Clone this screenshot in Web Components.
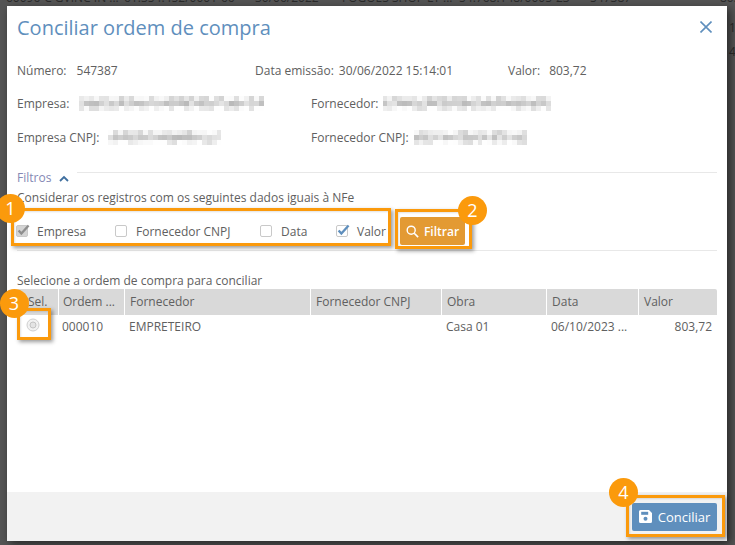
<!DOCTYPE html>
<html lang="pt-BR">
<head>
<meta charset="utf-8">
<title>Conciliar ordem de compra</title>
<style>
  html, body { margin: 0; height: 545px; overflow: hidden; background: #555; }
  body { font-family: "Open Sans", sans-serif; font-size: 12px; color: #606060; }
</style>
</head>
<body>
<conciliar-page></conciliar-page>
<script>
class PixelBlur extends HTMLElement
{
  connectedCallback ()
  {
    const width = Number(this.getAttribute('width'))
    const seed = Number(this.getAttribute('seed') || 3)
    const columns = Math.round(width / 5)
    const rowBase = [232, 208, 243]
    let cells = ''
    let value = seed * 97

    for (let i = 0; i < columns * 3; i++) {
      value = (value * 137 + 59) % 1013
      const grey = Math.min(254, rowBase[Math.floor(i / columns)] + (value % 44) - 22)
      cells += `<i style="background:rgb(${grey},${grey},${grey})"></i>`
    }

    this.attachShadow({ mode: 'open' }).innerHTML = `
      <style>
        :host { display: inline-block; width: ${width}px; height: 15px; }
        div { display: grid; grid-template-columns: repeat(${columns}, 1fr); grid-auto-rows: 5px; }
      </style>
      <div>${cells}</div>
    `
  }
}

class InfoField extends HTMLElement
{
  constructor ()
  {
    super()
    this.attachShadow({ mode: 'open' }).innerHTML = `
      <style>
        :host { display: flex; align-items: center; flex: none; white-space: nowrap; }
        .label { margin-right: var(--gap, 6px); }
        .value { display: flex; align-items: center; }
      </style>
      <span class="label"><slot name="label"></slot></span>
      <span class="value"><slot></slot></span>
    `
  }
}

class FilterCheck extends HTMLElement
{
  connectedCallback ()
  {
    const state = this.getAttribute('state')
    const tick = state === 'grey' ? '#8e8e8e' : '#5f8fbd'
    const fill = state === 'grey' ? '#d4d4d4' : '#fff'
    const mark = state
      ? `<path d="M2.6 6.4 5.4 9.6 12.6 1.6" fill="none" stroke="${tick}" stroke-width="2.3"/>`
      : ''

    this.attachShadow({ mode: 'open' }).innerHTML = `
      <style>
        :host { display: flex; align-items: center; flex: none; white-space: nowrap; }
        svg { width: 14px; height: 14px; margin-right: 7px; overflow: visible; }
      </style>
      <svg viewBox="0 0 14 14">
        <rect x=".5" y="1.5" width="11" height="11" rx="1.5" fill="${fill}" stroke="#c9c9c9"/>
        ${mark}
      </svg>
      <slot></slot>
    `
  }
}

class OrderTable extends HTMLElement
{
  constructor ()
  {
    super()
    const columns = [
      ['Sel.', 41, ''],
      ['Ordem ...', 66, '000010'],
      ['Fornecedor', 186, 'EMPRETEIRO'],
      ['Fornecedor CNPJ', 131, ''],
      ['Obra', 105, 'Casa 01'],
      ['Data', 92, '06/10/2023 ...'],
      ['Valor', 79, '803,72']
    ]
    const track = columns.map(c => c[1] + 'px').join(' ')

    this.attachShadow({ mode: 'open' }).innerHTML = `
      <style>
        :host { display: block; }
        .row { display: grid; grid-template-columns: ${track}; }
        .head { background: #d9d9d9; height: 26px; line-height: 25px; border-radius: 2px 2px 0 0; }
        .head span { padding-left: 4px; border-left: 1px solid #fff; overflow: hidden; white-space: nowrap; }
        .head span:first-child { border-left: 0; padding-left: 11px; }
        .head span:nth-child(n + 3) { padding-left: 5px; }
        .body { height: 24px; line-height: 24px; }
        .body span { padding: 0 5px; white-space: nowrap; }
        .body span:nth-child(2) { padding-left: 4px; }
        .body span:last-child { text-align: right; }
        .radio { display: flex; align-items: center; padding: 0 0 0 9px !important; }
        svg { width: 14px; height: 14px; position: relative; top: -2px; }
      </style>
      <div class="row head">${columns.map(c => `<span>${c[0]}</span>`).join('')}</div>
      <div class="row body">
        <span class="radio">
          <svg viewBox="0 0 14 14">
            <circle cx="7" cy="7" r="6" fill="#f2f2f2" stroke="#cfcfcf"/>
            <circle cx="7" cy="7" r="3" fill="#e4e4e4" stroke="#c4c4c4"/>
          </svg>
        </span>
        ${columns.slice(1).map(c => `<span>${c[2]}</span>`).join('')}
      </div>
    `
  }
}

class ActionButton extends HTMLElement
{
  constructor ()
  {
    super()
    this.attachShadow({ mode: 'open' }).innerHTML = `
      <style>
        :host {
          display: inline-flex;
          align-items: center;
          justify-content: center;
          gap: var(--icon-gap, 6px);
          box-sizing: border-box;
          color: #fff;
          background: var(--bg, #5f8fbd);
          border-radius: 2px;
          white-space: nowrap;
        }
        ::slotted(svg) { flex: none; }
      </style>
      <slot name="icon"></slot>
      <slot></slot>
    `
  }
}

class CalloutBox extends HTMLElement
{
  connectedCallback ()
  {
    const [x, y, w, h] = this.getAttribute('box').split(' ').map(Number)
    const [bx, by] = this.getAttribute('badge').split(' ').map(Number)

    this.attachShadow({ mode: 'open' }).innerHTML = `
      <style>
        :host { display: contents; }
        .box {
          position: absolute;
          left: ${x}px; top: ${y}px; width: ${w}px; height: ${h}px;
          box-sizing: border-box;
          border: 3px solid #fb9a0c;
          box-shadow: 2px 2px 4px rgba(0, 0, 0, .4), inset 1px 1px 2px rgba(0, 0, 0, .12);
        }
        .badge {
          position: absolute;
          left: ${bx - 14.5}px; top: ${by - 14.5}px; width: 29px; height: 29px;
          border-radius: 50%;
          background: #fb9a0c;
          color: #fff;
          font: 18px/29px "Open Sans", sans-serif;
          text-align: center;
        }
      </style>
      <div class="box"></div>
      <div class="badge"><slot></slot></div>
    `
  }
}

class ConciliarPage extends HTMLElement
{
  constructor ()
  {
    super()
    this.attachShadow({ mode: 'open' }).innerHTML = `
      <style>
        :host { display: block; position: relative; width: 735px; height: 545px; overflow: hidden; }
        .behind {
          position: absolute; left: 6px; top: -11px;
          display: flex;
          color: #2b2b2b; white-space: nowrap;
        }
        .behind span { flex: none; }
        .side { position: absolute; color: #2b2b2b; }
        .modal {
          position: absolute; left: 7px; top: 6px; width: 720px; height: 535px;
          display: flex; flex-direction: column;
          background: #fff;
          box-shadow: 3px 3px 9px rgba(0, 0, 0, .55);
        }
        header { display: flex; justify-content: space-between; align-items: center; padding: 7px 15px 0 10px; height: 28px; }
        h1 { margin: 0; font-size: 20px; font-weight: 400; color: #5f8fbd; }
        .content { flex: 1; padding: 0 10px; }
        .info { display: flex; align-items: center; height: 34px; }
        .info.first { margin-top: 14px; height: 31px; }
        .filters { display: flex; align-items: center; margin-top: 16px; height: 14px; color: #8488b4; }
        .filters hr { flex: 1; border: 0; border-top: 1px solid #e8e8e8; margin: 0 0 0 8px; position: relative; top: -5px; }
        .filters svg { width: 10px; height: 7px; margin-left: 8px; position: relative; top: 1px; }
        .hint { margin-top: 6px; height: 15px; line-height: 15px; }
        .checks { display: flex; align-items: center; height: 32px; margin: 10px 0 0 -1px; }
        .filtrar { --bg: #e39a33; --icon-gap: 5px; width: 65px; height: 28px; margin-left: 14px; font-weight: 600; }
        .rule { border: 0; border-top: 1px solid #e8e8e8; margin: 3px 0 0; }
        .pick { margin-top: 21px; height: 17px; line-height: 17px; }
        footer { display: flex; justify-content: flex-end; align-items: center; height: 49px; padding: 0 10px; background: #f2f2f2; }
        .conciliar { width: 85px; height: 28px; font-size: 13px; }
      </style>

      <div class="behind">
        <span style="width:118px">60096-C GVINC IN ...</span><span style="width:131px">61.354.452/0001-66</span><span style="width:87px">30/06/2022</span><span style="width:117px">FOGOES SHOP LT ...</span><span style="width:131px">54.768.148/0005-23</span><span style="width:130px">547387</span><span>803,72</span>
      </div>
      <span class="side" style="left:729px;top:19px">12</span>
      <span class="side" style="left:729px;top:43px">43</span>

      <section class="modal">
        <header>
          <h1>Conciliar ordem de compra</h1>
          <svg width="12" height="12" viewBox="0 0 12 12"><path d="M.5.5 11.5 11.5M11.5.5.5 11.5" stroke="#5f8fbd" stroke-width="1.6" fill="none"/></svg>
        </header>

        <div class="content">
          <div class="info first">
            <info-field style="width:238px;--gap:10px"><span slot="label">Número:</span>547387</info-field>
            <info-field style="width:253px;--gap:5px"><span slot="label">Data emissão:</span>30/06/2022 15:14:01</info-field>
            <info-field style="--gap:9px"><span slot="label">Valor:</span>803,72</info-field>
          </div>
          <div class="info">
            <info-field style="width:294px;--gap:10px"><span slot="label">Empresa:</span><pixel-blur width="185" seed="3"></pixel-blur></info-field>
            <info-field style="--gap:4px"><span slot="label">Fornecedor:</span><pixel-blur width="168" seed="7"></pixel-blur></info-field>
          </div>
          <div class="info">
            <info-field style="width:294px;--gap:9px"><span slot="label">Empresa CNPJ:</span><pixel-blur width="113" seed="5"></pixel-blur></info-field>
            <info-field style="--gap:5px"><span slot="label">Fornecedor CNPJ:</span><pixel-blur width="113" seed="9"></pixel-blur></info-field>
          </div>

          <div class="filters">
            <span>Filtros</span>
            <svg viewBox="0 0 10 7"><path d="M1 6 5 2 9 6" fill="none" stroke="#3f6f9f" stroke-width="1.8"/></svg>
            <hr>
          </div>
          <div class="hint">Considerar os registros com os seguintes dados iguais à NFe</div>
          <div class="checks">
            <filter-check state="grey" style="width:99px">Empresa</filter-check>
            <filter-check style="width:145px">Fornecedor CNPJ</filter-check>
            <filter-check style="width:76px">Data</filter-check>
            <filter-check state="blue" style="width:50px">Valor</filter-check>
            <action-button class="filtrar">
              <svg slot="icon" width="13" height="13" viewBox="0 0 12 12"><circle cx="4.8" cy="4.8" r="3.7" fill="none" stroke="#fff" stroke-width="1.3"/><path d="M7.6 7.6 11.2 11.2" stroke="#fff" stroke-width="1.5"/></svg>
              Filtrar
            </action-button>
          </div>
          <hr class="rule">
          <div class="pick">Selecione a ordem de compra para conciliar</div>
          <order-table></order-table>
        </div>

        <footer>
          <action-button class="conciliar">
            <svg slot="icon" width="13" height="13" viewBox="0 0 13 13"><path d="M1.5 0H10L13 3V11.5A1.5 1.5 0 0 1 11.5 13H1.5A1.5 1.5 0 0 1 0 11.5V1.5A1.5 1.5 0 0 1 1.5 0Z" fill="#fff"/><rect x="2.2" y="1.8" width="7" height="3" fill="#5f8fbd"/><circle cx="6.5" cy="8.8" r="2" fill="#5f8fbd"/></svg>
            Conciliar
          </action-button>
        </footer>
      </section>

      <callout-box box="11 208 380 38" badge="10.5 208">1</callout-box>
      <callout-box box="395 209 77 40" badge="472.5 210.5">2</callout-box>
      <callout-box box="17 308 34 32" badge="14 303">3</callout-box>
      <callout-box box="626 495 99 42" badge="623.5 492.5">4</callout-box>
    `
  }
}

customElements.define('pixel-blur', PixelBlur)
customElements.define('info-field', InfoField)
customElements.define('filter-check', FilterCheck)
customElements.define('order-table', OrderTable)
customElements.define('action-button', ActionButton)
customElements.define('callout-box', CalloutBox)
customElements.define('conciliar-page', ConciliarPage)
</script>
</body>
</html>
